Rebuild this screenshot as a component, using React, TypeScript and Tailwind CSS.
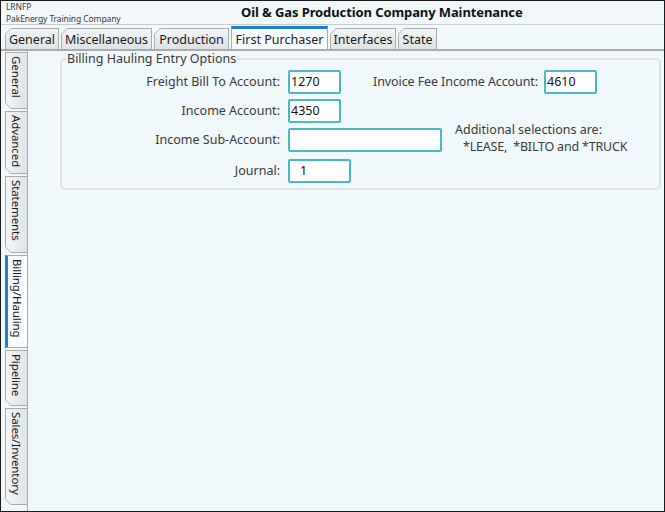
import React from "react";

const font = { fontFamily: '"Noto Sans", "Open Sans", sans-serif' };

function TopFold() {
  return (
    <svg className="absolute -top-px -left-px" width="7" height="7" viewBox="0 0 7 7">
      <polygon points="0,0 7,0 0,7" fill="#f0f8fc" />
      <line x1="0" y1="6.5" x2="6.5" y2="0" stroke="#a9abad" strokeWidth="1" />
    </svg>
  );
}

function LeftFold() {
  return (
    <svg className="absolute -bottom-px -left-px" width="7" height="7" viewBox="0 0 7 7">
      <polygon points="0,0 0,7 7,7" fill="#f0f8fc" />
      <line x1="0" y1="0.5" x2="6.5" y2="7" stroke="#a9abad" strokeWidth="1" />
    </svg>
  );
}

const topTabs = [
  { label: "General", w: "w-[54px]" },
  { label: "Miscellaneous", w: "w-[91px]" },
  { label: "Production", w: "w-[75px]" },
  { label: "First Purchaser", w: "w-[97px]", active: true },
  { label: "Interfaces", w: "w-[66px]" },
  { label: "State", w: "w-[39px]" },
];

const sideTabs = [
  { label: "General", h: "h-[57px]" },
  { label: "Advanced", h: "h-[63px]" },
  { label: "Statements", h: "h-[77px]" },
  { label: "Billing/Hauling", h: "h-[93px]", active: true },
  { label: "Pipeline", h: "h-[56px]" },
  { label: "Sales/Inventory", h: "h-[97px]" },
];

function Field({ value, w, pad = "pl-[1px]" }: { value: string; w: string; pad?: string }) {
  return (
    <div
      className={`${w} h-[24px] border-2 border-[#48bac6] rounded-[2px] bg-white flex items-center ${pad} text-[12.5px] text-[#111]`}
    >
      {value}
    </div>
  );
}

export default function App() {
  return (
    <div
      className="w-[665px] h-[512px] border border-[#1a1a1a] bg-[#f0f8fc] flex flex-col overflow-hidden text-[#333]"
      style={font}
    >
      {/* header */}
      <div className="h-[24px] flex items-start border-b border-[#c9cdd0]">
        <div className="w-[240px] pl-[5px] pt-[1px] leading-[10px] text-[8.5px] text-[#3a3a3a] tracking-[-0.1px]">
          <div>LRNFP</div>
          <div className="mt-[2px]">PakEnergy Training Company</div>
        </div>
        <div className="pt-[3px] text-[13px] font-bold text-[#111] leading-[17px] tracking-[-0.1px]">
          Oil &amp; Gas Production Company Maintenance
        </div>
      </div>

      {/* top tabs */}
      <div className="h-[26px] flex items-end pl-[4px] gap-[2px] border-b-2 border-[#a9abad]">
        {topTabs.map((t) => (
          <div
            key={t.label}
            className={`relative ${t.w} flex items-center justify-center text-[12.5px] leading-none ${
              t.active
                ? "h-[23px] bg-[#f7fbfd] border-x border-[#a9abad] border-t-[3px] border-t-[#1f7fd1] text-[#222]"
                : "h-[21px] bg-gradient-to-b from-[#f3f5f6] to-[#dfe3e5] border-x border-t border-[#a9abad] text-[#1a1a1a]"
            }`}
          >
            {!t.active && <TopFold />}
            <span className={t.active ? "pt-[2px]" : "pt-[3px]"}>{t.label}</span>
          </div>
        ))}
      </div>

      {/* body */}
      <div className="flex flex-1">
        <div className="w-[27px] border-r border-[#a9abad] flex flex-col items-end gap-[2px] pt-[1px] pl-[4px]">
          {sideTabs.map((t) => (
            <div
              key={t.label}
              className={`relative w-[22px] ${t.h} flex justify-center text-[11.5px] leading-none ${
                t.active
                  ? "bg-[#f7fbfd] border-y border-[#a9abad] border-l-[3px] border-l-[#1f7fd1]"
                  : "bg-gradient-to-r from-[#f3f5f6] to-[#dfe3e5] border-y border-l border-[#a9abad]"
              }`}
            >
              {!t.active && <LeftFold />}
              <span className="[writing-mode:vertical-rl] pt-[3px] text-[#1a1a1a] tracking-[-0.1px]">
                {t.label}
              </span>
            </div>
          ))}
        </div>

        <div className="flex-1 pl-[32px] pr-[4px] pt-[1px]">
          <fieldset className="w-[601px] h-[138px] border-2 border-[#dde2e5] rounded-[5px] pl-0">
            <legend className="ml-[4px] px-[1px] text-[12.5px] leading-[14px] text-[#3a3a3a]">
              Billing Hauling Entry Options
            </legend>
            <div className="flex flex-col text-[12.5px] text-[#3a3a3a] pt-[4px]">
              <div className="flex items-center h-[24px]">
                <div className="w-[219px] text-right pr-[1px]">Freight Bill To Account:</div>
                <div className="ml-[7px]">
                  <Field value="1270" w="w-[53px]" />
                </div>
                <div className="w-[197px] text-right tracking-[-0.1px]">Invoice Fee Income Account:</div>
                <div className="ml-[6px]">
                  <Field value="4610" w="w-[53px]" />
                </div>
              </div>
              <div className="flex items-center h-[24px] mt-[5px]">
                <div className="w-[219px] text-right pr-[1px]">Income Account:</div>
                <div className="ml-[7px]">
                  <Field value="4350" w="w-[53px]" />
                </div>
              </div>
              <div className="flex items-center h-[24px] mt-[5px]">
                <div className="w-[219px] text-right pr-[1px]">Income Sub-Account:</div>
                <div className="ml-[7px]">
                  <Field value="" w="w-[154px]" />
                </div>
                <div className="ml-[13px] leading-[17px] -mt-[4px]">
                  <div>Additional selections are:</div>
                  <div className="pl-[8px] tracking-[-0.2px]">*LEASE,&nbsp; *BILTO and *TRUCK</div>
                </div>
              </div>
              <div className="flex items-center h-[24px] mt-[7px]">
                <div className="w-[219px] text-right pr-[1px]">Journal:</div>
                <div className="ml-[7px]">
                  <Field value="1" w="w-[63px]" pad="pl-[10px]" />
                </div>
              </div>
            </div>
          </fieldset>
        </div>
      </div>
    </div>
  );
}
